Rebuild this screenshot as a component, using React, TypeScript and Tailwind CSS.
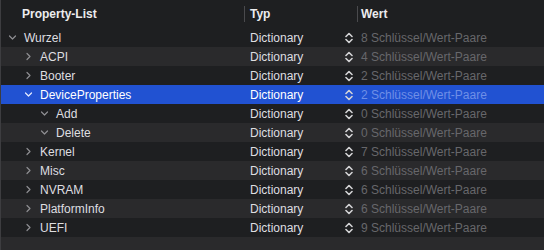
type Row = {
  name: string;
  depth: number;
  open: boolean;
  count: number;
  selected?: boolean;
};

const rows: Row[] = [
  { name: "Wurzel", depth: 0, open: true, count: 8 },
  { name: "ACPI", depth: 1, open: false, count: 4 },
  { name: "Booter", depth: 1, open: false, count: 2 },
  { name: "DeviceProperties", depth: 1, open: true, count: 2, selected: true },
  { name: "Add", depth: 2, open: true, count: 0 },
  { name: "Delete", depth: 2, open: true, count: 0 },
  { name: "Kernel", depth: 1, open: false, count: 7 },
  { name: "Misc", depth: 1, open: false, count: 6 },
  { name: "NVRAM", depth: 1, open: false, count: 6 },
  { name: "PlatformInfo", depth: 1, open: false, count: 6 },
  { name: "UEFI", depth: 1, open: false, count: 9 },
];

const indent = ["pl-[7px]", "pl-[23px]", "pl-[39px]"];

function Chevron({ open, selected }: { open: boolean; selected?: boolean }) {
  const color = selected ? "#e6ecff" : "#8e8e92";
  return (
    <svg width="9" height="9" viewBox="0 0 9 9" className="shrink-0">
      {open ? (
        <path d="M1.5 3 L4.5 6 L7.5 3" fill="none" stroke={color} strokeWidth="1.2" strokeLinecap="round" strokeLinejoin="round" />
      ) : (
        <path d="M3 1.5 L6 4.5 L3 7.5" fill="none" stroke={color} strokeWidth="1.2" strokeLinecap="round" strokeLinejoin="round" />
      )}
    </svg>
  );
}

function Stepper() {
  return (
    <svg width="8" height="12" viewBox="0 0 8 12" className="shrink-0">
      <path d="M1 4.5 L4 1.5 L7 4.5" fill="none" stroke="#d4d4d6" strokeWidth="1.6" strokeLinecap="round" strokeLinejoin="round" />
      <path d="M1 7.5 L4 10.5 L7 7.5" fill="none" stroke="#d4d4d6" strokeWidth="1.6" strokeLinecap="round" strokeLinejoin="round" />
    </svg>
  );
}

export default function App() {
  return (
    <div className="flex h-[250px] w-[544px] flex-col overflow-hidden border-l border-[#3d3d40] bg-[#2a2a2c] font-['Liberation_Sans',Arial,sans-serif] text-[12px] text-[#dedee0]">
      <div className="flex h-[28px] shrink-0 items-center bg-[#1e1f21] font-semibold text-[#ececee]">
        <div className="w-[243px] pl-[21px]">Property-List</div>
        <div className="flex h-full w-[113px] items-center">
          <div className="h-[16px] w-px bg-[#4a4a4d]" />
          <span className="pl-[5px]">Typ</span>
        </div>
        <div className="flex h-full flex-1 items-center">
          <div className="h-[16px] w-px bg-[#4a4a4d]" />
          <span className="pl-[3px]">Wert</span>
        </div>
      </div>
      {rows.map((row, i) => (
        <div
          key={row.name}
          className={`flex h-[19px] shrink-0 items-center ${
            row.selected ? "bg-[#2152d2] text-white" : i % 2 === 0 ? "bg-[#1e1f21]" : "bg-[#2a2a2c]"
          }`}
        >
          <div className={`flex w-[243px] items-center gap-[7px] ${indent[row.depth]}`}>
            <Chevron open={row.open} selected={row.selected} />
            <span>{row.name}</span>
          </div>
          <div className="flex w-[113px] items-center justify-between pl-[6px] pr-[4px]">
            <span>Dictionary</span>
            <Stepper />
          </div>
          <div className={`flex-1 pl-[4px] ${row.selected ? "text-[#6f8fe6]" : "text-[#67676b]"}`}>
            {row.count} Schlüssel/Wert-Paare
          </div>
        </div>
      ))}
      <div className="flex-1 bg-[#2a2a2c]" />
    </div>
  );
}
